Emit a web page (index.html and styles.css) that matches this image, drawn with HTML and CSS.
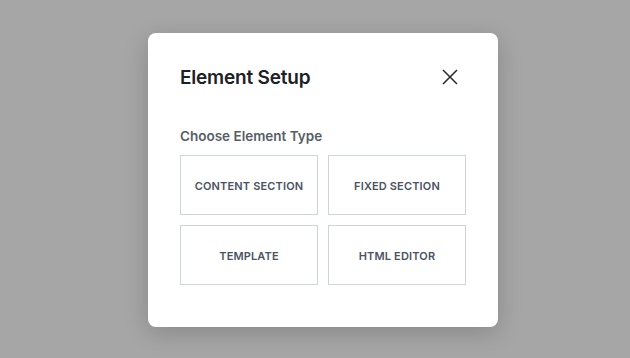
FILE: index.html
```html
<!DOCTYPE html>
<html lang="en">
<head>
    <meta charset="UTF-8">
    <title>Element Setup</title>
    <link rel="stylesheet" href="styles.css">
</head>
<body>
    <div class="modal">
        <div class="modal-header">
            <h2>Element Setup</h2>
            <button class="close-btn" aria-label="Close">
                <svg width="18" height="18" viewBox="0 0 18 18">
                    <path d="M2 2 L16 16 M16 2 L2 16" stroke="#2b2f36" stroke-width="1.6" fill="none"/>
                </svg>
            </button>
        </div>

        <div class="label">Choose Element Type</div>
        <div class="type-grid">
            <button class="type-btn">Content Section</button>
            <button class="type-btn">Fixed Section</button>
            <button class="type-btn">Template</button>
            <button class="type-btn">HTML Editor</button>
        </div>
    </div>
</body>
</html>
```

FILE: styles.css
```css
* {
    box-sizing: border-box;
    margin: 0;
    padding: 0;
}

body {
    font-family: Inter, "Noto Sans", sans-serif;
    background: #a6a6a6;
    height: 100vh;
    padding: 33px 0 0 148px;
    color: #1f2329;
}

.modal {
    width: 350px;
    height: 294px;
    background: #fff;
    border-radius: 8px;
    padding: 32px 32px 42px;
    box-shadow: 0 6px 24px rgba(0, 0, 0, 0.18);
}

.modal-header {
    display: flex;
    justify-content: space-between;
    align-items: center;
    height: 24px;
}

.modal-header h2 {
    font-size: 19px;
    font-weight: 600;
    letter-spacing: -0.2px;
    color: #1d2127;
}

.close-btn {
    background: none;
    border: none;
    width: 18px;
    height: 18px;
    margin-right: 7px;
    cursor: pointer;
}

.label {
    margin-top: 37px;
    font-size: 13.5px;
    line-height: 20px;
    font-weight: 600;
    color: #565d68;
}

.type-grid {
    margin-top: 9px;
    display: grid;
    grid-template-columns: 138px 138px;
    grid-auto-rows: 60px;
    gap: 10px;
}

.type-btn {
    background: #fff;
    border: 1px solid #cdd4da;
    padding-top: 2px;
    font-family: inherit;
    font-size: 11px;
    font-weight: 600;
    letter-spacing: 0.15px;
    text-transform: uppercase;
    color: #4a5263;
    cursor: pointer;
}
```
